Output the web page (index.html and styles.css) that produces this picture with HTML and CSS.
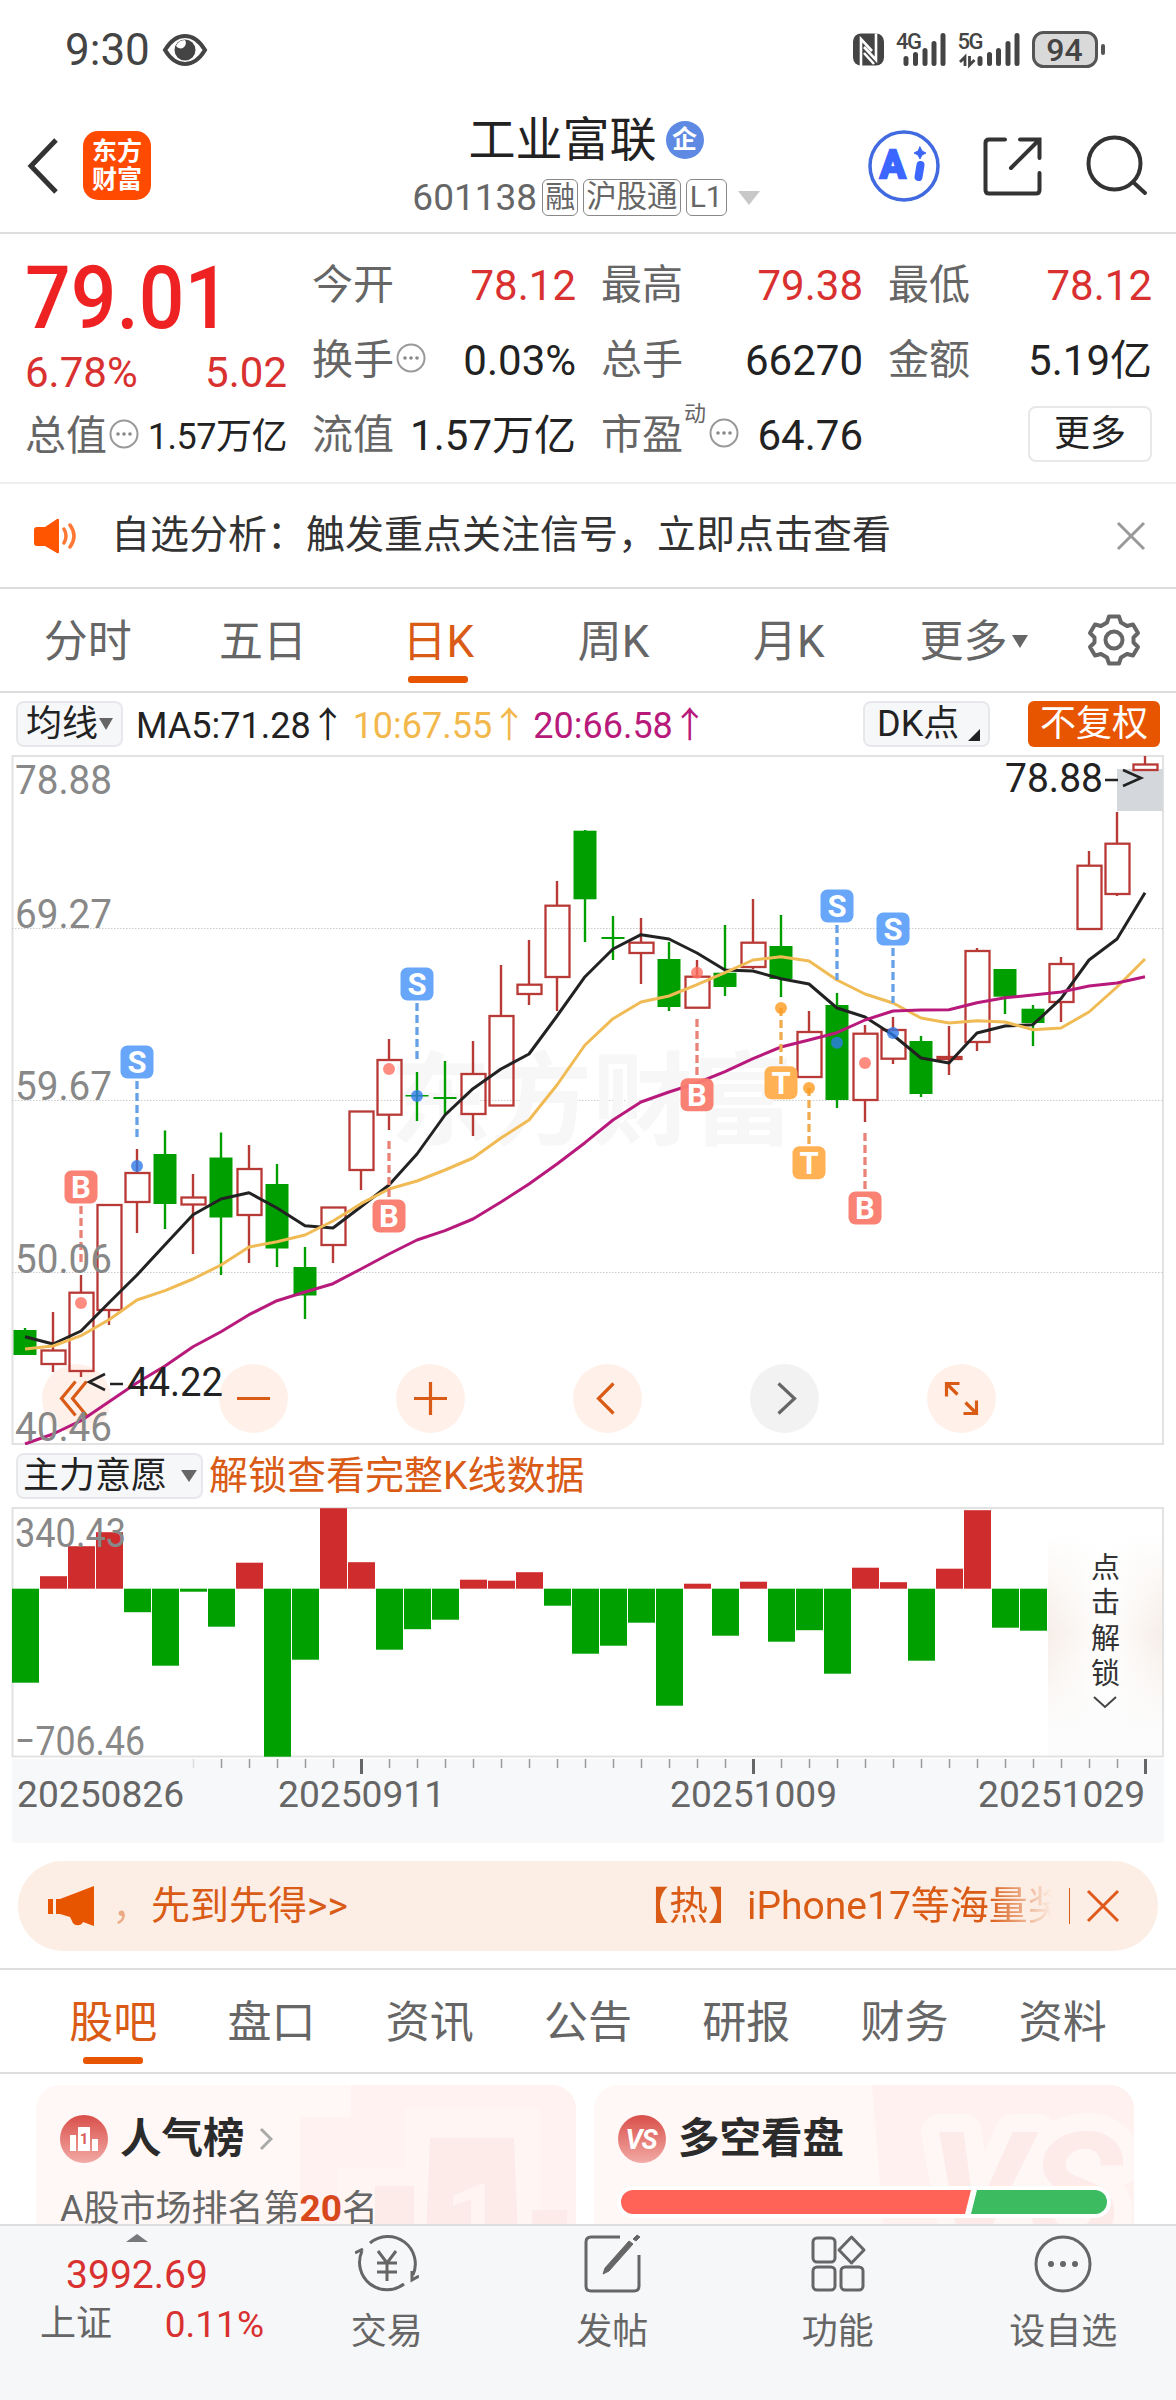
FILE: index.html
```html
<!DOCTYPE html>
<html lang="zh-CN">
<head>
<meta charset="UTF-8">
<meta name="viewport" content="width=device-width, initial-scale=1.0">
<title>工业富联 601138</title>
<link rel="stylesheet" href="styles.css">
</head>
<body>
  <!-- Status bar -->
  <div class="status">
    <span class="clock">9:30</span>
    <svg class="eye" width="46" height="34" viewBox="0 0 46 34">
      <path d="M3 17C9 7 16 3 23 3s14 4 20 14c-6 10-13 14-20 14S9 27 3 17z" fill="none" stroke="#444" stroke-width="4"/>
      <circle cx="23" cy="17" r="10.5" fill="#444"/>
      <path d="M14 13a5 5 0 0 0 9-6 10 10 0 0 0-9 6z" fill="#fff"/>
    </svg>
    <svg class="signals" width="256" height="40" viewBox="850 30 256 40">
      <rect x="853" y="33.500" width="31" height="32" rx="8" fill="#444"/>
      <path d="M861 66V39l11 12M876 33.500V60l-12-13M864 53l10 11" fill="none" stroke="#fff" stroke-width="2.600"/>
      <g stroke="#444" stroke-width="5" stroke-linecap="round">
        <path d="M906 58.500v5M915.500 54.500v9M925 50.500v13M934 43.500v20M943 35.500v28"/>
        <path d="M980 58.500v5M989.500 54.500v9M998.500 50.500v13M1008 43.500v20M1017 35.500v28"/>
      </g>
      <path d="M965 66V57l-5 5M969.500 56v9l5-5" fill="none" stroke="#444" stroke-width="2.800"/>
      <text class="net" x="896" y="49">4G</text>
      <text class="net" x="957.500" y="49">5G</text>
      <rect x="1033.500" y="32.500" width="63" height="34" rx="10" fill="#d9d9d9" stroke="#555" stroke-width="3"/>
      <rect x="1101" y="44" width="4" height="11" rx="2" fill="#555"/>
      <text class="batt" x="1064.500" y="61" text-anchor="middle">94</text>
    </svg>
  </div>

  <!-- Title bar -->
  <header class="topbar">
    <svg class="back" width="34" height="58" viewBox="0 0 34 58"><path d="M30 3L5 29l25 26" fill="none" stroke="#333" stroke-width="5"/></svg>
    <div class="logo">东方<br>财富</div>
    <div class="stock">
      <div class="name">工业富联<span class="corp">企</span></div>
      <div class="code">601138<i class="tag">融</i><i class="tag">沪股通</i><i class="tag">L1</i><b class="tri"></b></div>
    </div>
    <svg class="tools" width="290" height="76" viewBox="866 128 290 76" fill="none" stroke="#333" stroke-width="4" stroke-linecap="round">
      <circle cx="904" cy="166" r="34" stroke="#4169e0" stroke-width="3.500"/>
      <text class="ai" x="880" y="178">A</text>
      <path d="M920.500 165l-2 12" stroke="#3b66ff" stroke-width="8"/>
      <path d="M920 147l2 4 4 2-4 2-2 4-2-4-4-2 4-2z" fill="#3b66f5" stroke="#3b66f5" stroke-width="1"/>
      <path d="M1005 139.500h-16q-3.500 0-3.500 3.500v47q0 3.500 3.500 3.500h47q3.500 0 3.500-3.500v-17"/>
      <path d="M1020 139.500h19.500V158M1038 141l-27 27"/>
      <circle cx="1114.500" cy="163.500" r="26"/><path d="M1133 182l12 11"/>
    </svg>
  </header>

  <!-- Quote -->
  <section class="quote">
    <div class="col">
      <div class="price"><span>79.01</span></div>
      <div class="change"><span>6.78%</span><span>5.02</span></div>
      <div class="cell small"><label>总值</label><svg class="info" viewBox="0 0 30 30"><use href="#dots"/></svg><span>1.57万亿</span></div>
    </div>
    <div class="col">
      <div class="cell"><label>今开</label><span class="up">78.12</span></div>
      <div class="cell"><label>换手</label><svg class="info" viewBox="0 0 30 30"><use href="#dots"/></svg><span>0.03%</span></div>
      <div class="cell"><label>流值</label><span>1.57万亿</span></div>
    </div>
    <div class="col">
      <div class="cell"><label>最高</label><span class="up">79.38</span></div>
      <div class="cell"><label>总手</label><span>66270</span></div>
      <div class="cell"><label>市盈<sup>动</sup></label><svg class="info" viewBox="0 0 30 30"><use href="#dots"/></svg><span>64.76</span></div>
    </div>
    <div class="col">
      <div class="cell"><label>最低</label><span class="up">78.12</span></div>
      <div class="cell"><label>金额</label><span>5.19亿</span></div>
      <div class="cell"><button class="more">更多</button></div>
    </div>
  </section>

  <!-- Notice -->
  <div class="notice">
    <svg width="46" height="36" viewBox="0 0 46 36">
      <path d="M4 9h8L24 1q2-1 2 1v32q0 2-2 1L12 28H4q-3 0-3-3V12q0-3 3-3z" fill="#ff5500"/>
      <path d="M31 11q4 7 0 14M37 7q8 11 0 22" fill="none" stroke="#ff7733" stroke-width="3.500" stroke-linecap="round"/>
    </svg>
    <p>自选分析：触发重点关注信号，立即点击查看</p>
    <svg class="x" width="30" height="30" viewBox="0 0 30 30"><path d="M2 2l26 26M28 2L2 28" stroke="#999" stroke-width="3"/></svg>
  </div>

  <!-- Period tabs -->
  <nav class="periods">
    <a>分时</a><a>五日</a><a class="on">日K</a><a>周K</a><a>月K</a><a>更多<b class="tri"></b></a>
    <svg class="gear" width="54" height="54" viewBox="-27 -27 54 54" fill="none" stroke="#666" stroke-width="4">
      <path d="M-5-23.500h10l2 6 6 3.500 6-1.500 5 8.500-4.500 4.500v5l4.500 4.500-5 8.500-6-1.500-6 3.500-2 6h-10l-2-6-6-3.500-6 1.500-5-8.500 4.500-4.500v-5l-4.500-4.500 5-8.500 6 1.500 6-3.500z" stroke-linejoin="round"/>
      <circle r="8.500"/>
    </svg>
  </nav>

  <!-- Moving averages -->
  <div class="ma">
    <span class="pick">均线<b class="tri"></b></span>
    <span class="m5">MA5:71.28<em>↑</em></span>
    <span class="m10">10:67.55<em>↑</em></span>
    <span class="m20">20:66.58<em>↑</em></span>
    <span class="pick dk">DK点<b class="corner"></b></span>
    <span class="adj">不复权</span>
  </div>

  <svg id="kline" class="kline" width="1176" height="690" viewBox="0 755 1176 690"></svg>

  <div class="indicator">
    <span class="pick">主力意愿<b class="tri"></b></span>
    <a>解锁查看完整K线数据</a>
  </div>

  <svg id="flow" class="flow" width="1176" height="336" viewBox="0 1507 1176 336"></svg>

  <!-- Promo -->
  <div class="promo">
    <svg width="46" height="40" viewBox="0 0 46 40" fill="#e85500"><path d="M0 13h5v15H0zM8 13h4L46 0v40l-11-4c-2 5-10 4-11-1l-2-4-10-3H8z"/></svg>
    <i>，</i><span class="p1">先到先得&gt;&gt;</span>
    <span class="p2">【热】iPhone17等海量奖</span>
    <b class="bar"></b>
    <svg class="x" width="34" height="34" viewBox="0 0 34 34"><path d="M2 2l30 30M32 2L2 32" stroke="#e0591b" stroke-width="3"/></svg>
  </div>

  <nav class="sections">
    <a class="on">股吧</a><a>盘口</a><a>资讯</a><a>公告</a><a>研报</a><a>财务</a><a>资料</a>
  </nav>

  <!-- Cards -->
  <div class="cards">
    <div class="card">
      <svg class="deco" width="540" height="150" viewBox="36 2085 540 150">
        <path d="M351 2085h225v150H300v-118h51z" fill="#fff2f0"/>
        <path d="M405 2109h135v126h-135zM337 2168h68v67h-68z" fill="#fff6f4"/>
        <path d="M430 2138h84l4 97h-92zM375 2186h39v49h-39zM532 2210h35v25h-35z" fill="#fdebe9"/>
        <path d="M453 2196l27-12h5v51h-14v-36l-18 7z" fill="#fff4f2"/>
      </svg>
      <h3><svg width="48" height="48" viewBox="0 0 48 48">
        <circle cx="24" cy="24" r="24" fill="url(#badge)"/>
        <path d="M10 20h6v16h-6zM18 12h12v24H18zM32 24h6v12h-6z" fill="#fff"/>
        <text x="24" y="29" class="rank" text-anchor="middle">1</text></svg>人气榜
        <svg class="go" width="14" height="24" viewBox="0 0 14 24"><path d="M2 2l10 10L2 22" fill="none" stroke="#aaa" stroke-width="3"/></svg></h3>
      <p>A股市场排名第<strong>20</strong>名</p>
    </div>
    <div class="card">
      <svg class="deco" width="540" height="150" viewBox="594 2085 540 150">
        <path d="M872 2085h262v150H884z" fill="#fff1ef"/>
        <text x="928" y="2244" class="vs outline">VS</text>
        <text x="928" y="2244" class="vs">VS</text>
      </svg>
      <h3><svg width="48" height="48" viewBox="0 0 48 48">
        <circle cx="24" cy="24" r="24" fill="url(#badge)"/>
        <text x="23" y="34" class="vsmini" text-anchor="middle">VS</text></svg>多空看盘</h3>
      <svg class="ratio" width="494" height="32" viewBox="0 0 494 32">
        <rect width="494" height="32" rx="16" fill="#fff"/>
        <path d="M16 4h338l-6 24H16a12 12 0 0 1 0-24z" fill="#ff6357"/>
        <path d="M360 4h118a12 12 0 0 1 0 24H354z" fill="#3cbb60"/>
      </svg>
    </div>
  </div>

  <!-- Bottom bar -->
  <footer class="dock">
    <div class="index">
      <b class="tri"></b>
      <span class="pts">3992.69</span>
      <div><label>上证</label><span>0.11%</span></div>
    </div>
    <a><svg viewBox="0 0 64 60" width="64" height="60" fill="none" stroke="#666" stroke-width="3">
      <path d="M15 9A27.500 27.500 0 0 1 58 41M49 50A27.500 27.500 0 0 1 7 17M0 19l8-4M64 42l-7 4v-9"/>
      <path d="M23 17l9 12 9-12M22 29h20M22 38h20M32 29v18"/></svg>交易</a>
    <a><svg viewBox="0 0 60 60" width="60" height="60" fill="none" stroke="#666" stroke-width="3">
      <path d="M38 3H9q-5 0-5 5v44q0 5 5 5h43q5 0 5-5V21"/>
      <path d="M51 10l-4-3-24 27-2 6 6-3zM54 7l4-4-3-2-4 4z" fill="#666" stroke-width="1"/></svg>发帖</a>
    <a><svg viewBox="0 0 60 60" width="60" height="60" fill="none" stroke="#666" stroke-width="3">
      <rect x="5" y="4" width="22" height="24" rx="4"/><path d="M43.500 3L56 16 43.500 29 31 16z" stroke-linejoin="round"/>
      <rect x="5" y="33" width="22" height="23" rx="4"/><rect x="33" y="33" width="22" height="23" rx="4"/></svg>功能</a>
    <a><svg viewBox="0 0 60 60" width="60" height="60" fill="none" stroke="#666" stroke-width="3">
      <circle cx="30" cy="30" r="27"/><g fill="#666" stroke="none"><circle cx="18" cy="30" r="3"/><circle cx="30" cy="30" r="3"/><circle cx="42" cy="30" r="3"/></g></svg>设自选</a>
  </footer>

  <!-- shared symbols -->
  <svg class="defs" width="0" height="0">
    <defs>
      <linearGradient id="badge" x1="0" y1="0" x2="0" y2="1"><stop offset="0" stop-color="#d94f4a"/><stop offset="1" stop-color="#f2aaa5"/></linearGradient>
      <symbol id="dots" viewBox="0 0 30 30"><circle cx="15" cy="15" r="13.500" fill="none" stroke="#999" stroke-width="2"/><g fill="#888"><circle cx="9" cy="15" r="1.800"/><circle cx="15" cy="15" r="1.800"/><circle cx="21" cy="15" r="1.800"/></g></symbol>
    </defs>
  </svg>
  <script src="chart.js"></script>
</body>
</html>
```

FILE: styles.css
```css
*{box-sizing:border-box;margin:0;padding:0}
body{
  width:1176px;height:2400px;overflow:hidden;
  display:flex;flex-direction:column;
  background:#fff;color:#222;
  font-family:Roboto,"Noto Sans CJK SC",sans-serif;
  font-size:42px;line-height:1;
}
body>*{flex:none}
svg{display:block;flex:none}
i,em{font-style:normal}
.defs{position:absolute}
.tri{display:inline-block;border:solid transparent;border-top-color:#666;border-bottom:0}

/* ---- status bar ---- */
.status{height:98px;display:flex;align-items:center;padding:1px 70px 0 65px;color:#444}
.clock{font-size:44px}
.eye{margin-left:12px}
.signals{margin-left:auto}
.net{font-size:22px;font-weight:500;fill:#444;letter-spacing:-1.5px}
.batt{font-size:32px;font-weight:500;fill:#444}

/* ---- title bar ---- */
.topbar{height:136px;border-bottom:2px solid #ddd;display:flex;align-items:center;padding:1px 20px 0 26px}
.logo{
  width:68px;height:69px;margin-left:23px;padding-top:7px;
  background:#ff4a00;color:#fff;border-radius:15px;
  font-size:25px;line-height:28px;font-weight:700;text-align:center;
}
.stock{flex:1;padding:4px 0 0 155px;display:flex;flex-direction:column;align-items:center}
.name{display:flex;align-items:center;font-size:47px;line-height:60px}
.corp{
  width:38px;height:38px;margin-left:9px;border-radius:50%;
  background:#5e8ae4;color:#fff;font-size:25px;line-height:37px;font-weight:700;text-align:center;
}
.code{display:flex;align-items:center;height:56px;font-size:37px;color:#666;white-space:nowrap}
.tag{
  height:37px;margin-left:5px;padding:0 2px;border:1.5px solid #888;border-radius:6px;
  font-size:30px;line-height:34px;
}
.tag:nth-of-type(2){font-size:30.5px}
.tag:nth-of-type(3){padding:0 3px}
.code .tri{margin-left:11px;border-width:14px 11px 0;border-top-color:#c8c8c8}
.tools{margin-left:auto}
.ai{font:700 38px Roboto,sans-serif;fill:#3b66ff;stroke:#3b66ff;stroke-width:2.5}

/* ---- quote ---- */
.quote{
  height:250px;padding:14px 24px 0 25px;border-bottom:2px solid #eee;
  display:grid;grid-template-columns:262px 264px 262px 264px;column-gap:25px;
}
.price{height:98px;line-height:100px;color:#ee2222}
.price span{display:inline-block;font-size:87px;font-weight:500;transform:scaleX(.925);transform-origin:left}
.change{height:53px;display:flex;justify-content:space-between;align-items:center;color:#d93030;font-size:42px}
.cell{height:75px;display:flex;align-items:center;white-space:nowrap}
.cell span{margin-left:auto}
.cell label{color:#666;font-size:41px;position:relative}
.cell .up{color:#d93030}
.cell.small span{font-size:36px;letter-spacing:-.5px}
.cell sup{position:absolute;left:83px;top:-12px;font-size:22px}
.info{width:30px;height:30px;margin:-5px 0 0 2px}
.col:nth-child(3) .info{margin-left:26px}
.more{
  width:124px;height:56px;margin:-4px 0 0 auto;border:2px solid #e8e8e8;border-radius:8px;
  background:#fff;color:#222;font:inherit;font-size:36px;
}

/* ---- notice ---- */
.notice{height:105px;border-bottom:2px solid #ddd;display:flex;align-items:center;padding:0 30px 0 33px;color:#333}
.notice p{margin-left:32px;font-size:39px}
.notice .x{margin-left:auto}

/* ---- period tabs ---- */
.periods{height:104px;border-bottom:2px solid #ddd;display:flex;align-items:center;color:#666;font-size:44px}
.periods a,.sections a{position:relative;display:flex;align-items:center;justify-content:center;height:100%;padding-top:3px}
.periods a{width:175.3px}
.periods a:nth-child(6){padding-right:22px;width:217px}
.periods .tri{margin-left:5px;border-width:13px 8px 0}
.periods .gear{margin-left:-6px}
.on{color:#d95b16}
.on::after{
  content:"";position:absolute;left:50%;bottom:8px;width:60px;height:7px;margin-left:-30px;
  border-radius:3px;background:#e85500;
}

/* ---- moving averages ---- */
.ma{height:62px;display:flex;align-items:center;padding:0 16px;font-size:36px;white-space:nowrap}
.pick{
  height:46px;border:2px solid #e6e8ec;border-radius:8px;background:#f6f7f9;color:#222;
  display:flex;align-items:center;padding:0 8px;font-size:36px;white-space:nowrap;
}
.ma em{display:inline-block;width:36px;text-align:center;font-family:"Noto Sans CJK SC",sans-serif;margin-left:-1px}
.ma .pick .tri{margin-left:1px;border-width:12px 7px 0}
.m5{margin-left:13px}
.m10{margin-left:7px;color:#f2b84b}
.m20{margin-left:6px;color:#b81a7c}
.dk{margin-left:auto;width:127px;padding-left:12px}
.corner{align-self:flex-end;margin:0 0 4px 9px;border-left:12px solid transparent;border-bottom:12px solid #222}
.adj{width:132px;height:46px;margin-left:38px;border-radius:6px;background:#e85500;color:#fff;text-align:center;line-height:46px}

/* ---- charts ---- */
.axis{font-size:40px;fill:#888}
.mark{font-size:40px;fill:#222}
.badge{font-size:31px;font-weight:700;fill:#fff}
.water{font-size:101px;font-weight:700;fill:#f7f7f7}
.date{font-size:36px;fill:#666}
.unlock{font-size:29px;fill:#333}

.indicator{height:62px;display:flex;align-items:center;padding-left:16px;font-size:39px;color:#d95b16}
.indicator .pick{width:187px;padding:0 5px}
.indicator .tri{margin-left:14px;border-width:12px 8px 0}
.indicator a{margin-left:6px}

/* ---- promo ---- */
.promo{
  height:90px;margin:18px 18px 17px;border-radius:45px;background:#fceee5;color:#d95b16;
  display:flex;align-items:center;padding:0 38px 0 30px;font-size:39px;white-space:nowrap;
}
.promo i{width:57px;opacity:.45;padding-left:18px}
.promo .p2{margin-left:auto;width:422px;overflow:hidden;line-height:60px;-webkit-mask:linear-gradient(90deg,#000 85%,transparent);mask:linear-gradient(90deg,#000 85%,transparent)}
.promo .bar{width:1px;height:36px;margin-left:17px;background:#d95b16}
.promo .x{margin-left:16px}

/* ---- section tabs ---- */
.sections{height:106px;border-top:2px solid #ddd;border-bottom:2px solid #ddd;display:flex;padding:0 34px;color:#666;font-size:44px}
.sections a{width:158.300px}
.sections .on::after{bottom:8px}

/* ---- cards ---- */
.cards{height:150px;display:flex;gap:18px;padding:11px 36px 0;overflow:hidden}
.card{position:relative;width:540px;height:200px;border-radius:24px;overflow:hidden;padding:26px 24px;background:#fff8f6}
.deco{position:absolute;left:0;top:0}
.card h3,.card p,.ratio{position:relative}
.card h3{display:flex;align-items:center;height:56px;font-size:41.5px;font-weight:700;color:#2b2b2b}
.card h3 svg:first-child{margin-right:12px}
.card h3 .go{margin-left:14px}
.card p{margin-top:23px;font-size:36px;color:#666}
.card strong{color:#d9481c;font-size:37px}
.rank{font-size:15px;font-weight:700;fill:#d9605a}
.vs{font:italic 700 158px Roboto,sans-serif;fill:#fdebe9}
.outline{stroke:#fff7f5;stroke-width:36px;stroke-linejoin:round}
.vsmini{font:italic 700 27px Roboto,sans-serif;fill:#fff;letter-spacing:-1px}
.ratio{margin:19px 0 0 -1px}

/* ---- bottom bar ---- */
.dock{position:relative;height:178px;border-top:2px solid #ddd;background:#f6f7f9;display:flex;font-size:36px;color:#666}
.dock a{width:225.500px;display:flex;flex-direction:column;align-items:center;padding-top:8px;gap:20px}
.dock a svg{height:60px}
.index{width:274px;display:flex;flex-direction:column;align-items:center;padding-top:8px}
.index .tri{border-width:0 11px 8px;border-bottom:8px solid #77777c}
.index .pts{margin-top:14px;font-size:39px;color:#d93030}
.index div{align-self:stretch;margin-top:11px;padding:0 10px 0 40px;display:flex;justify-content:space-between}
.index div span{color:#d93030;font-size:37px}
```

FILE: chart.js
```js
const RED = '#b83a36', GREEN = '#009f00';
const cx = i => 25 + 28 * i;

// [kind, top, bottom, high, low] per day, y in page pixels
const days = [
  ['g',1330,1355,1328,1355],['r',1350.5,1364,1312,1372],['r',1292.7,1371,1275,1377],['r',1205,1310,1205,1325],
  ['r',1173,1202,1149,1233],['g',1154,1204,1130.5,1229],['r',1197.5,1204.5,1174,1254],['g',1157.5,1217.5,1132.5,1275],
  ['r',1169,1215,1145,1263],['g',1184,1248.5,1164,1267],['g',1267,1295.5,1247,1319],['r',1207.5,1245,1207,1263],
  ['r',1111.5,1170,1111,1190],['r',1060,1114.7,1039,1130],['g',1095,1096.5,1072,1121],['g',1097,1099,1061,1115],
  ['r',1074,1114,1041,1136],['r',1016,1105.5,965,1105],['r',984.7,994,940,1005],['r',905.7,977,881,1011],
  ['g',830.7,899.3,830,942],['g',937,939,916,960],['r',942.7,953,918,984],['g',959,1007,942,1011],
  ['r',976.7,1007.7,960,1007],['g',972.7,987,925,996],['r',942.7,967,899,969],['g',946,979,915,997],
  ['r',1032,1077,1011,1077],['g',1005,1100,993,1108],['r',1033.7,1100,1025,1122],['r',1030,1058.7,1017,1064],
  ['g',1041,1094,1036,1097],['r',1057,1059,1026,1075],['r',951,1042,948,1051],['g',969,996.7,969,1014],
  ['g',1008.7,1023,1005,1046],['r',964,1002,957,1022],['r',865.7,929,851,929],['r',843.7,894,812,896],
  ['r',764.5,770,756,770]
];

const ma5 = [1336.7,1344,1331,1302.7,1275,1244.7,1214.7,1199,1192.7,1208,1225.7,1228,1206.7,1185,1154,1115,1088.7,1069,1054,1016,976.7,949,934.7,939,953,970,971,978.7,984,1008,1017,1035,1058,1063,1033,1026,1024.7,998.7,960,939,892.7];
const ma10 = [1349,1346,1335.7,1319.7,1300,1290.7,1279,1265,1247,1241.7,1235,1221,1203.7,1189,1181,1170,1158,1138,1120,1085,1045,1018.7,1002,996,984.7,972.7,960,956.7,961,980,994,1003,1018,1023,1020.7,1022,1029.7,1028,1012,987,959];
const ma20 = [1444,1434,1420.7,1401.7,1382.7,1366,1346.7,1331.7,1314.7,1300.7,1292,1283.7,1269,1254,1240,1230.7,1219,1202,1184,1164,1142.7,1120,1102,1092,1083,1071.7,1058.7,1047,1040,1032.7,1020,1011,1010,1009.7,1002.7,997.7,995,992,986,983,976.7];

// [letter, day, badge centre, dash from, dash to, dot]
const trades = [
  ['B',2,1187,1206,1262,1303],['S',4,1062,1081,1137,1166],['B',13,1216,1141,1197,1069],['S',14,984,1003,1059,1096],
  ['B',24,1094.7,1019,1075,972.7],['T',27,1082.7,1008,1064,1008],['T',28,1162.7,1088,1144,1088],
  ['S',29,906,925,980,1042.7],['B',30,1208,1133,1189,1063],['S',31,929,948,1003,1033]
];
const tint = {B:'#f97d6e', S:'#62a2fa', T:'#ffae4d'};
const dash = {B:'#e98378', S:'#66a1e8', T:'#efac50'};
const dot = {B:'#ff6f61', S:'#2f7be8', T:'#ff9a1f'};

const text = (c, x, y, w, s) => `<text class="${c}" x="${x}" y="${y}" textLength="${w}" lengthAdjust="spacingAndGlyphs">${s}</text>`;
const line = (ys, color) => `<polyline points="${ys.map((y, i) => cx(i) + ',' + y).join(' ')}" fill="none" stroke="${color}" stroke-width="3" stroke-linejoin="round"/>`;

function drawKline(){
  let s = '<rect x="12.5" y="756" width="1150.500" height="688" fill="none" stroke="#e2e2e2" stroke-width="2"/>';
  for (const y of [928.5, 1100.5, 1272.5])
    s += `<path d="M12 ${y}H1163" stroke="#ccc" stroke-dasharray="1.5 1.5"/>`;
  s += text('water', 390, 1137, 404, '东方财富');

  // pan / zoom buttons
  const glyphs = ['M-1-17l-14 17 14 17M10-17L-4 0l14 17','M-16.500 0h33','M-16.500 0h33M0-16.500v33','M6-15L-9 0 6 15','M-6-15L10 0-6 15','M-15-2v-13h13M-15-15L-4-4M15 2v13H2M15 15L4 4'];
  glyphs.forEach((g, i) => {
    const off = i == 4;
    s += `<g transform="translate(${76.5 + 177 * i} 1398.500)"><circle r="34.500" fill="${off ? '#f2f2f2' : '#fff1e9'}"/>
      <path d="${g}" fill="none" stroke="${off ? '#666' : '#d95b16'}" stroke-width="3.200"/></g>`;
  });

  s += '<rect x="1117" y="769" width="46" height="42" fill="#d4d8dd"/>';
  days.forEach(([k, t, b, h, l], i) => {
    const x = cx(i);
    if (k == 'g')
      s += `<path d="M${x} ${h}V${l}" stroke="${GREEN}" stroke-width="2.400"/><rect x="${x - 11.500}" y="${t}" width="23" height="${b - t}" fill="${GREEN}"/>`;
    else
      s += `<path d="M${x} ${h}V${t}M${x} ${b}V${l}" stroke="${RED}" stroke-width="2.400"/><rect x="${x - 11.500}" y="${t}" width="24" height="${b - t}" fill="none" stroke="${RED}" stroke-width="2.300"/>`;
  });
  s += line(ma5, '#222') + line(ma10, '#f0bb55') + line(ma20, '#b81a7c');

  for (const [c, i, y, d1, d2, p] of trades){
    const x = cx(i);
    s += `<path d="M${x} ${d1}V${d2}" stroke="${dash[c]}" stroke-width="3.300" stroke-dasharray="8 4"/>
      <circle cx="${x}" cy="${p}" r="6" fill="${dot[c]}" opacity=".8"/>
      <rect x="${x - 16.500}" y="${y - 16.500}" width="33" height="33" rx="7" fill="${tint[c]}" opacity=".96"/>
      <text class="badge" x="${x}" y="${y + 11}" text-anchor="middle">${c}</text>`;
  }

  s += text('axis', 15, 794, 97, '78.88') + text('axis', 15, 928, 97, '69.27') + text('axis', 15, 1100, 97, '59.67')
    + text('axis', 15, 1273, 97, '50.06') + text('axis', 15, 1441, 97, '40.46');
  s += text('mark', 1005, 792, 98, '78.88') + text('mark', 127, 1396, 96, '44.22');
  s += '<path d="M1105 780h13M1123 770l18 8-18 8" fill="none" stroke="#222" stroke-width="2.600"/>';
  s += '<path d="M105 1374l-16 8 16 8M110 1384h13" fill="none" stroke="#222" stroke-width="2.600"/>';
  document.getElementById('kline').innerHTML = s;
}

// end of each money-flow bar, measured from the zero line (positive = inflow)
const flows = [-94,12.5,42.5,56.5,-23.5,-77,-3,-38,26,-168,-71,80.500,26.500,-61,-40.500,-31,9,8,16.500,-17,-65,-57,-34,-117,5,-47,7,-53,-41.500,-85,21,6.500,-72,20,78.500,-39,-42];

function drawFlow(){
  const zero = 1588.7;
  let s = `<defs><linearGradient id="veilH"><stop offset="0" stop-color="#f6eee8"/><stop offset=".5" stop-color="#fff"/><stop offset="1" stop-color="#f6eee8"/></linearGradient>
    <linearGradient id="veilV" x1="0" y1="0" x2="0" y2="1"><stop offset=".1" stop-color="#fff"/><stop offset=".5" stop-color="#fff" stop-opacity="0"/><stop offset=".9" stop-color="#fcfcfc"/></linearGradient></defs>
    <rect x="12" y="1759" width="1152" height="84" fill="#f7f8fa"/>
    <rect x="1048" y="1509" width="115" height="247" fill="url(#veilH)"/><rect x="1048" y="1509" width="115" height="247" fill="url(#veilV)"/>
    <rect x="12.500" y="1508" width="1150.500" height="248.500" fill="none" stroke="#e2e2e2" stroke-width="2"/>`;
  flows.forEach((v, i) => {
    s += `<rect x="${12 + 28 * i}" y="${v > 0 ? zero - v : zero}" width="27" height="${Math.abs(v)}" fill="${v > 0 ? '#cf2d2d' : '#00a000'}"/>`;
  });
  for (let i = 6; i <= 40; i++){
    const big = i == 12 || i == 26 || i == 40;
    s += `<path d="M${cx(i) + .5} 1759v${big ? 15 : 9}" stroke="${big ? '#666' : i == 6 ? '#ddd' : '#999'}" stroke-width="${big ? 3 : 1.500}"/>`;
  }
  s += text('axis', 15, 1547, 111, '340.43') + text('axis', 15, 1755, 130, '−706.46');
  [['20250826', 17], ['20250911', 278], ['20251009', 670], ['20251029', 978]].forEach(([d, x]) => s += text('date', x, 1807, 167, d));
  [...'点击解锁'].forEach((c, i) => s += `<text class="unlock" x="1091" y="${1578 + 35.300 * i}">${c}</text>`);
  s += '<path d="M1094 1697l11 10 11-10" fill="none" stroke="#444" stroke-width="2"/>';
  document.getElementById('flow').innerHTML = s;
}

drawKline();
drawFlow();
```
